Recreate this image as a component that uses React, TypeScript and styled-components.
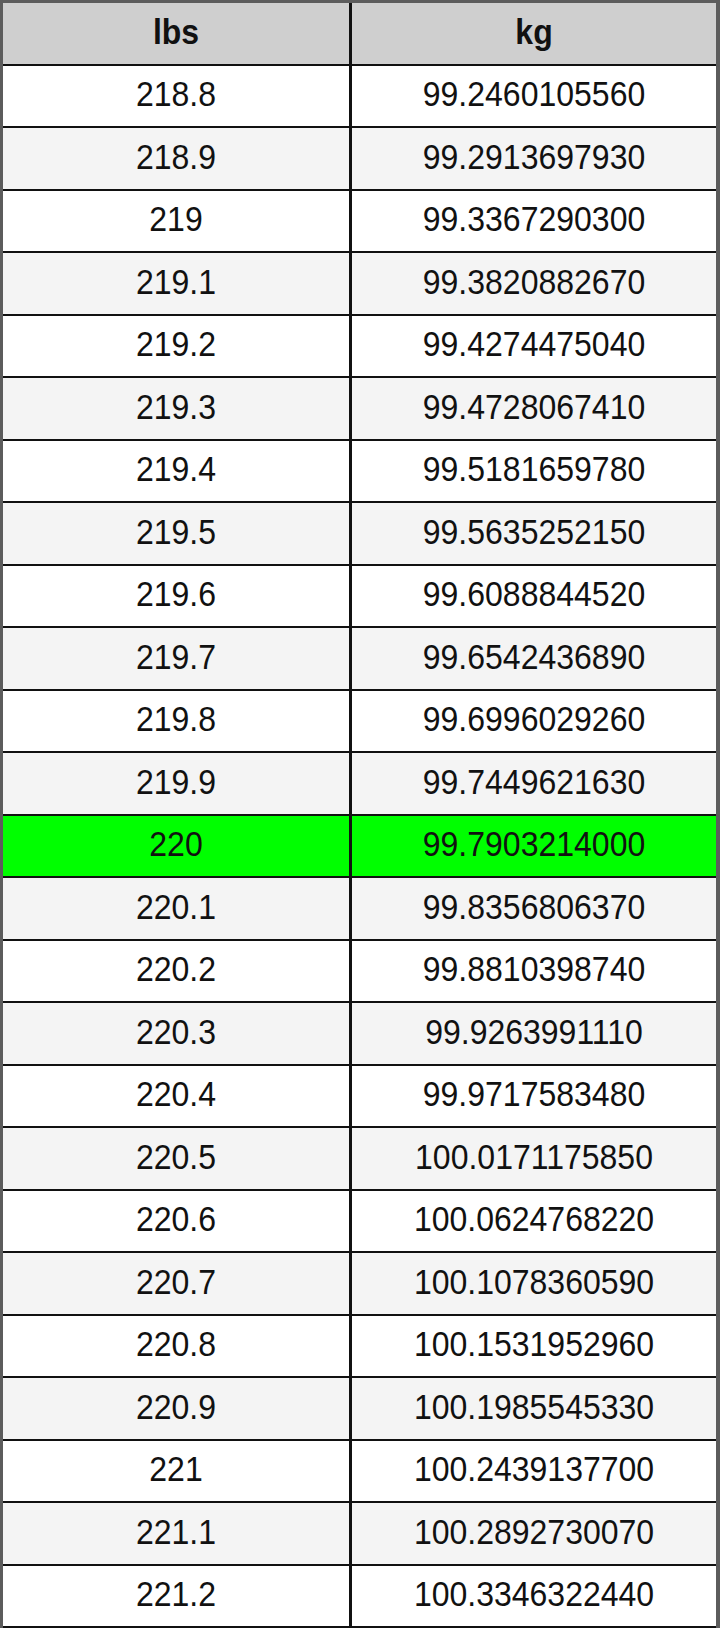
import React from "react";
import styled, { createGlobalStyle } from "styled-components";

const GlobalStyle = createGlobalStyle`
  html, body {
    margin: 0;
    padding: 0;
    background: #fff;
  }
  body {
    font-family: "Liberation Sans", Arial, sans-serif;
  }
`;

const Table = styled.div`
  width: 720px;
  box-sizing: border-box;
  border-top: 3px solid #5c5c5c;
  border-left: 3px solid #5c5c5c;
  border-right: 4px solid #5c5c5c;
  display: flex;
  flex-direction: column;
`;

const Row = styled.div<{ $bg: string }>`
  display: grid;
  grid-template-columns: 349px 1fr;
  height: 62.5px;
  box-sizing: border-box;
  border-bottom: 2.5px solid #111;
  background: ${(p) => p.$bg};
`;

const Cell = styled.div<{ $bold?: boolean; $divider?: boolean }>`
  display: flex;
  align-items: center;
  justify-content: center;
  font-size: 32px;
  font-weight: ${(p) => (p.$bold ? 700 : 400)};
  color: #111;
  border-right: ${(p) => (p.$divider ? "3px solid #111" : "none")};
  padding-bottom: 2px;
`;

const Text = styled.span`
  display: inline-block;
  transform: scaleY(1.08);
`;

const rows: [string, string][] = [
  ["218.8", "99.2460105560"],
  ["218.9", "99.2913697930"],
  ["219", "99.3367290300"],
  ["219.1", "99.3820882670"],
  ["219.2", "99.4274475040"],
  ["219.3", "99.4728067410"],
  ["219.4", "99.5181659780"],
  ["219.5", "99.5635252150"],
  ["219.6", "99.6088844520"],
  ["219.7", "99.6542436890"],
  ["219.8", "99.6996029260"],
  ["219.9", "99.7449621630"],
  ["220", "99.7903214000"],
  ["220.1", "99.8356806370"],
  ["220.2", "99.8810398740"],
  ["220.3", "99.9263991110"],
  ["220.4", "99.9717583480"],
  ["220.5", "100.0171175850"],
  ["220.6", "100.0624768220"],
  ["220.7", "100.1078360590"],
  ["220.8", "100.1531952960"],
  ["220.9", "100.1985545330"],
  ["221", "100.2439137700"],
  ["221.1", "100.2892730070"],
  ["221.2", "100.3346322440"],
];

const rowColor = (lbs: string, i: number) => {
  if (lbs === "220") return "#00ff00";
  return i % 2 === 0 ? "#ffffff" : "#f4f4f4";
};

const App = () => {
  return (
    <>
      <GlobalStyle />
      <Table>
        <Row $bg="#cfcfcf">
          <Cell $bold $divider>
            <Text>lbs</Text>
          </Cell>
          <Cell $bold>
            <Text>kg</Text>
          </Cell>
        </Row>
        {rows.map(([lbs, kg], i) => (
          <Row key={lbs} $bg={rowColor(lbs, i)}>
            <Cell $divider>
              <Text>{lbs}</Text>
            </Cell>
            <Cell>
              <Text>{kg}</Text>
            </Cell>
          </Row>
        ))}
      </Table>
    </>
  );
};

export default App;
